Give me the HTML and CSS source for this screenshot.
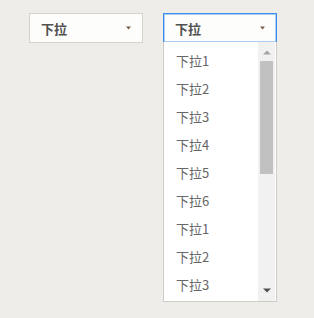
FILE: index.html
```html
<!DOCTYPE html>
<html lang="zh">
<head>
<meta charset="utf-8">
<link rel="stylesheet" href="styles.css">
</head>
<body>
<div class="row">
  <div class="select">
    <span class="value">下拉</span>
    <svg class="chev" width="5" height="4" viewBox="0 0 5 4"><path d="M0 0.5h5L2.5 3.5z" fill="#7a5a44"/></svg>
  </div>
  <div class="select-wrap">
    <div class="select open">
      <span class="value">下拉</span>
      <svg class="chev" width="5" height="4" viewBox="0 0 5 4"><path d="M0 0.5h5L2.5 3.5z" fill="#7a5a44"/></svg>
    </div>
    <div class="dropdown">
      <ul class="list">
        <li>下拉1</li>
        <li>下拉2</li>
        <li>下拉3</li>
        <li>下拉4</li>
        <li>下拉5</li>
        <li>下拉6</li>
        <li>下拉1</li>
        <li>下拉2</li>
        <li>下拉3</li>
      </ul>
      <div class="scrollbar">
        <svg class="arrow up" width="8" height="5" viewBox="0 0 8 5"><path d="M0 4.5L4 0.5L8 4.5z" fill="#a3a3a3"/></svg>
        <div class="track"><div class="thumb"></div></div>
        <svg class="arrow down" width="8" height="5" viewBox="0 0 8 5"><path d="M0 0.5L4 4.5L8 0.5z" fill="#505050"/></svg>
      </div>
    </div>
  </div>
</div>
</body>
</html>
```
FILE: styles.css
```css
html, body {
  margin: 0;
  padding: 0;
  background: #eeede9;
}
body {
  font-family: "Noto Sans CJK SC", "Noto Sans", sans-serif;
  width: 314px;
  height: 318px;
  overflow: hidden;
}
.row {
  display: flex;
  gap: 20px;
  padding: 13px 0 0 29px;
  align-items: flex-start;
}
.select-wrap {
  position: relative;
  width: 114px;
}
.select {
  box-sizing: border-box;
  width: 114px;
  height: 30px;
  background: #fdfdfb;
  border: 1px solid #d5d2cb;
  display: flex;
  align-items: center;
  justify-content: space-between;
  padding: 0 11px 0 11px;
}
.select.open {
  border: 1px solid #3d8ee8;
  box-shadow: 0 0 0 1px #a9cdf3 inset;
}
.value {
  font-size: 13px;
  font-weight: bold;
  color: #505050;
  line-height: 1;
}
.chev {
  display: block;
}
.dropdown {
  position: absolute;
  top: 29px;
  left: 0;
  box-sizing: border-box;
  width: 114px;
  height: 260px;
  background: #ffffff;
  border: 1px solid #cfccc6;
  border-top: none;
  display: flex;
}
.list {
  list-style: none;
  margin: 0;
  padding: 5px 0 0 0;
  flex: 1;
}
.list li {
  height: 28px;
  line-height: 28px;
  font-size: 13px;
  color: #666666;
  padding-left: 12px;
}
.scrollbar {
  width: 17px;
  background: #f1f1f1;
  display: flex;
  flex-direction: column;
  align-items: center;
  margin-right: 1px;
}
.arrow {
  display: block;
  flex: none;
}
.arrow.up {
  margin-top: 8px;
}
.arrow.down {
  margin-bottom: 8px;
}
.track {
  flex: 1;
  width: 100%;
  display: flex;
  justify-content: center;
  padding-top: 6px;
}
.thumb {
  width: 13px;
  height: 113px;
  background: #c1c1c1;
}
```
